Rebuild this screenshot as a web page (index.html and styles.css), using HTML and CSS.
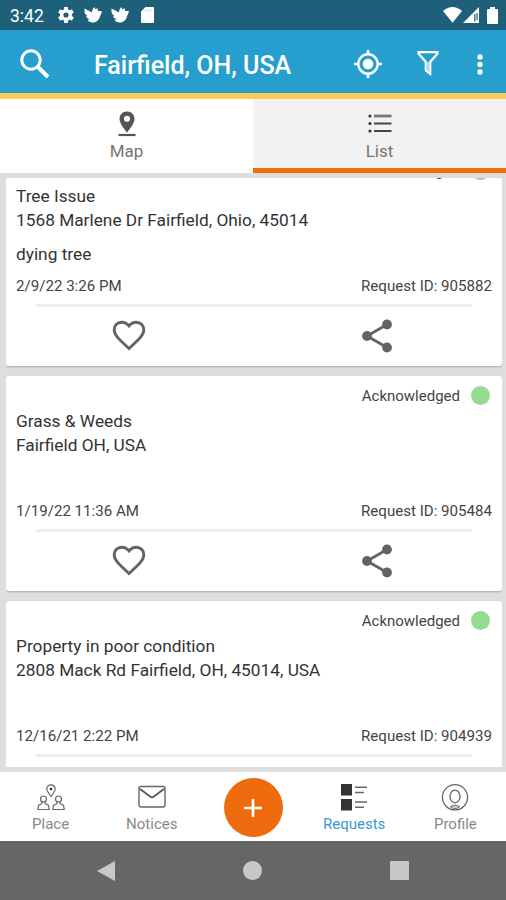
FILE: index.html
```html
<!DOCTYPE html>
<html lang="en">
<head>
<meta charset="utf-8">
<title>Requests</title>
<link rel="stylesheet" href="styles.css">
</head>
<body>
<svg class="defs" width="0" height="0">
  <symbol id="heart" viewBox="0 0 34 32"><path d="M17 28.500 L14.800 26.500 C7 19.400 2.200 15 2.200 9.800 C2.200 5.300 5.500 2.200 9.700 2.200 C12.500 2.200 15.200 3.600 17 5.900 C18.800 3.600 21.500 2.200 24.300 2.200 C28.500 2.200 31.800 5.300 31.800 9.800 C31.800 15 27 19.400 19.200 26.500 Z" fill="none" stroke="#636363" stroke-width="2.900"/></symbol>
  <symbol id="share" viewBox="0 0 32 34"><path d="M26 5.500 L6 17 L26 28.500" fill="none" stroke="#636363" stroke-width="2.800"/><g fill="#636363"><circle cx="26" cy="5.500" r="4.900"/><circle cx="6" cy="17" r="4.900"/><circle cx="26" cy="28.500" r="4.900"/></g></symbol>
  <symbol id="bird" viewBox="0 0 18 16"><path d="M.5 1.500 L8 5.500 C8 3 9 1.500 10.500 0 L11.500 2.500 L13.500 1 L14 4 L17.800 4 C17.500 6 17 8 16 9 C15.500 13 12 15.500 9 15.500 C6 15.500 4.500 14 3.500 13 L5.500 12 C3.500 11.500 2.500 10.500 2 9.500 L3.500 9 C1.500 8 .5 6 .5 4 Z" fill="#fff"/></symbol>
</svg>
<header class="status">
  <span class="clock">3:42</span>
  <svg class="gear" width="16" height="16" viewBox="0 0 16 16"><circle cx="8" cy="8" r="4.300" fill="none" stroke="#fff" stroke-width="3.400"/><path d="M8 0V3M8 13V16M1.100 4L3.700 5.500M12.300 10.500L14.900 12M1.100 12L3.700 10.500M12.300 5.500L14.900 4" stroke="#fff" stroke-width="3.800"/></svg>
  <svg class="bird" width="18" height="16"><use href="#bird"/></svg>
  <svg class="bird second" width="18" height="16"><use href="#bird"/></svg>
  <svg class="sd" width="13" height="16" viewBox="0 0 13 16"><path d="M4.500 0H12Q13 0 13 1V15Q13 16 12 16H1Q0 16 0 15V4.500Z" fill="#fff"/><path d="M4.600 2.500V4.500M7.300 2.500V4.500M10 2.500V4.500" stroke="#c3d3da" stroke-width="1.200"/></svg>
  <span class="space"></span>
  <svg width="19" height="16" viewBox="0 0 19 16"><path d="M0 4Q9.500-4 19 4L9.500 15.700Z" fill="#fff"/></svg>
  <svg class="signal" width="16" height="16" viewBox="0 0 16 16"><path d="M16 0V16H0Z" fill="#fff"/><path d="M11.800 7V14.500M14 6V13" stroke="#1e6079" stroke-width="1.200"/></svg>
  <svg class="battery" width="11" height="17" viewBox="0 0 11 17"><path d="M3 0H8V2H10Q11 2 11 3V16Q11 17 10 17H1Q0 17 0 16V3Q0 2 1 2H3Z" fill="#fff"/></svg>
</header>
<div class="appbar">
  <svg class="search" width="30" height="30" viewBox="0 0 30 30"><circle cx="11" cy="11" r="9.200" fill="none" stroke="#fff" stroke-width="3"/><path d="M17.500 17.500L28 28" stroke="#fff" stroke-width="4"/></svg>
  <h1>Fairfield, OH, USA</h1>
  <span class="space"></span>
  <svg class="locate" width="28" height="28" viewBox="0 0 28 28"><circle cx="14" cy="14" r="9.700" fill="none" stroke="#fff" stroke-width="2.400"/><circle cx="14" cy="14" r="5.300" fill="#fff"/><path d="M14 0V5M14 23V28M0 14H5M23 14H28" stroke="#fff" stroke-width="2.600"/></svg>
  <svg class="filter" width="22" height="25" viewBox="0 0 22 25"><path d="M1.500 1.200H20.500V2.500L13.200 11V22.800L8.800 19.500V11L1.500 2.500Z" fill="none" stroke="#fff" stroke-width="2.200"/><path d="M9.500 11H12.500V21L9.500 19Z" fill="#b5d9ea"/></svg>
  <svg class="more" width="6" height="21" viewBox="0 0 6 21"><g fill="#fff"><circle cx="3" cy="3" r="2.700"/><circle cx="3" cy="10.500" r="2.700"/><circle cx="3" cy="18" r="2.700"/></g></svg>
</div>
<nav class="tabs">
  <a class="tab"><svg width="18" height="26" viewBox="0 0 18 26"><path fill-rule="evenodd" d="M9 .5C4.500 .5 1.500 3.800 1.500 8C1.500 13 9 21.500 9 21.500S16.500 13 16.500 8C16.500 3.800 13.500 .5 9 .5ZM9 4.800A3 3 0 1 1 9 10.800A3 3 0 1 1 9 4.800Z" fill="#555"/><path d="M.5 24H17.500" stroke="#555" stroke-width="2.200"/></svg><span>Map</span></a>
  <a class="tab active"><svg width="24" height="26" viewBox="0 0 24 26"><g fill="#333"><circle cx="2" cy="5" r="1.600"/><circle cx="2" cy="12.500" r="1.600"/><circle cx="2" cy="20" r="1.600"/></g><path d="M6 5H23.500" stroke="#777" stroke-width="2.800"/><path d="M6 12.500H23.500M6 20H23.500" stroke="#444" stroke-width="2.200"/></svg><span>List</span></a>
</nav>
<main class="list">
 <div class="viewport">
  <div class="cards">
  <article class="card">
    <div class="state">Acknowledged<i></i></div>
    <div class="info"><div class="title">Tree Issue</div><div class="address">1568 Marlene Dr Fairfield, Ohio, 45014</div></div>
    <div class="note">dying tree</div>
    <div class="meta"><span class="date">2/9/22 3:26 PM</span><span class="rid">Request ID: 905882</span></div>
    <hr>
    <div class="actions"><svg width="34" height="32"><use href="#heart"/></svg><svg width="32" height="34"><use href="#share"/></svg></div>
  </article>
  <article class="card">
    <div class="state">Acknowledged<i></i></div>
    <div class="info"><div class="title">Grass &amp; Weeds</div><div class="address">Fairfield OH, USA</div></div>
    <div class="note"></div>
    <div class="meta"><span class="date">1/19/22 11:36 AM</span><span class="rid">Request ID: 905484</span></div>
    <hr>
    <div class="actions"><svg width="34" height="32"><use href="#heart"/></svg><svg width="32" height="34"><use href="#share"/></svg></div>
  </article>
  <article class="card">
    <div class="state">Acknowledged<i></i></div>
    <div class="info"><div class="title">Property in poor condition</div><div class="address">2808 Mack Rd Fairfield, OH, 45014, USA</div></div>
    <div class="note"></div>
    <div class="meta"><span class="date">12/16/21 2:22 PM</span><span class="rid">Request ID: 904939</span></div>
    <hr>
  </article>
  </div>
 </div>
</main>
<nav class="bottom">
  <a><svg width="28" height="27" viewBox="0 0 28 27"><g fill="none" stroke="#666" stroke-width="1.200"><path d="M14 12.500C12 9.500 9.800 7.500 9.800 5A4.200 4.200 0 0 1 18.200 5C18.200 7.500 16 9.500 14 12.500Z"/><circle cx="6.500" cy="15" r="3"/><circle cx="21.500" cy="15" r="3"/><path d="M5 17.500V19.500L1.500 21.500L.8 25.500H12.200L11.500 21.500L8 19.500V17.500M20 17.500V19.500L16.500 21.500L15.800 25.500H27.200L26.500 21.500L23 19.500V17.500"/></g><circle cx="14" cy="5" r="1.200" fill="#222"/></svg><span>Place</span></a>
  <a><svg width="28" height="27" viewBox="0 0 28 27"><rect x="1" y="2.500" width="26" height="20.500" rx="2" fill="none" stroke="#666" stroke-width="1.400"/><path d="M2 5L12.500 12.800Q14 13.900 15.500 12.800L26 5" fill="none" stroke="#555" stroke-width="1.800"/></svg><span>Notices</span></a>
  <a class="add"><b><svg width="20" height="20" viewBox="0 0 20 20"><path d="M10 1V19M1 10H19" stroke="#fff" stroke-width="2.600"/></svg></b></a>
  <a class="current"><svg width="28" height="27" viewBox="0 0 28 27"><path d="M1 0H12V11.500H1ZM1 15H12V26.500H1Z" fill="#333"/><path d="M15 3.200H27M15 8.500H24M15 18H27M15 23.300H24" stroke="#666" stroke-width="1.500"/></svg><span>Requests</span></a>
  <a><svg width="28" height="27" viewBox="0 0 28 27"><g fill="none" stroke="#666" stroke-width="1.300"><circle cx="14" cy="13.300" r="12.600"/><ellipse cx="14" cy="12.500" rx="5" ry="6.300"/></g><path d="M9 22.500Q14 19.500 19 22.500Q14 27 9 22.500Z" fill="#ccc" stroke="#777" stroke-width="1"/></svg><span>Profile</span></a>
</nav>
<footer class="system">
  <svg width="18" height="20" viewBox="0 0 18 20"><path d="M18 0V20L0 10Z" fill="#c8c8c8"/></svg>
  <svg width="19" height="19" viewBox="0 0 18 18"><circle cx="9" cy="9" r="9" fill="#c8c8c8"/></svg>
  <svg width="19" height="19" viewBox="0 0 19 19"><rect width="19" height="19" rx="1" fill="#c8c8c8"/></svg>
</footer>
</body>
</html>
```

FILE: styles.css
```css
* { box-sizing: border-box; }
body { margin: 0; width: 506px; height: 900px; display: flex; flex-direction: column; overflow: hidden; font-family: Roboto, sans-serif; color: #333; background: #fff; }
svg { display: block; flex: none; }
.defs { position: absolute; }
.space { flex: 1; }
.status { height: 30px; flex: none; display: flex; align-items: center; background: #1e6079; padding: 0 8px 0 10px; color: #fff; }
.clock { font-size: 17.5px; width: 48px; padding-top: 2px; }
.bird { margin-left: 10px; }
.bird.second { margin-left: 9px; }
.sd { margin-left: 12px; }
.signal { margin-left: 1px; }
.battery { margin: 0 0 0 8px; }
.appbar { height: 63px; flex: none; display: flex; align-items: center; background: #279fce; color: #fff; padding: 5px 23px 0 20px; }
.search { margin-top: 0; }
h1 { margin: 4px 0 0 44px; font-size: 25px; font-weight: 500; line-height: 30px; white-space: nowrap; }
.filter { margin: -2px 0 0 35px; }
.more { margin-left: 38px; }
.tabs { height: 80px; flex: none; display: flex; border-top: 6px solid #fecb57; }
.tab { flex: 1; display: flex; flex-direction: column; align-items: center; padding-top: 12px; color: #757575; font-size: 17px; }
.tab span { line-height: 20px; margin-top: 4px; }
.tab.active { background: #f2f2f2; border-bottom: 5px solid #ec7009; }
.list { flex: none; height: 599px; background: #dedede; padding: 5px 4px 5px 6px; }
.viewport { height: 589px; overflow: hidden; }
.cards { display: flex; flex-direction: column; gap: 10px; margin-top: -27px; }
.card { flex: none; height: 215px; background: #fff; border-radius: 3px; box-shadow: 0 1px 2px #aaa; padding: 10px 10px 0; }
.state { display: flex; justify-content: flex-end; align-items: center; height: 20px; font-size: 15px; color: #444; }
.state i { width: 19px; height: 19px; border-radius: 50%; background: #93dc92; margin: -1px 2px 0 11px; }
.info { margin-top: 3px; font-size: 17.3px; line-height: 24px; }
.title, .address { white-space: nowrap; }
.note { height: 24px; margin-top: 10px; font-size: 17.3px; line-height: 24px; }
.meta { display: flex; justify-content: space-between; margin-top: 10px; height: 20px; line-height: 20px; font-size: 15.1px; color: #444; }
hr { margin: 8px 20px 0; height: 3px; border: 0; background: #eee; }
.actions { display: grid; grid-template-columns: 1fr 1fr; height: 58px; align-items: center; justify-items: center; margin: 0 -9px 0 -11px; }
.bottom { height: 69px; flex: none; display: grid; grid-template-columns: repeat(5, 1fr); background: #fff; }
.bottom a { display: flex; flex-direction: column; align-items: center; padding-top: 12px; color: #888; font-size: 15px; }
.bottom span { line-height: 18px; margin-top: 4px; }
.bottom .add { padding: 6px 0 0 1px; }
.bottom b { width: 59px; height: 59px; border-radius: 50%; background: #ee6c0d; display: grid; place-items: center; }
.bottom .current { color: #3999cf; }
.system { height: 59px; flex: none; background: #666; display: flex; align-items: center; justify-content: space-between; padding: 0 97px; }
```
